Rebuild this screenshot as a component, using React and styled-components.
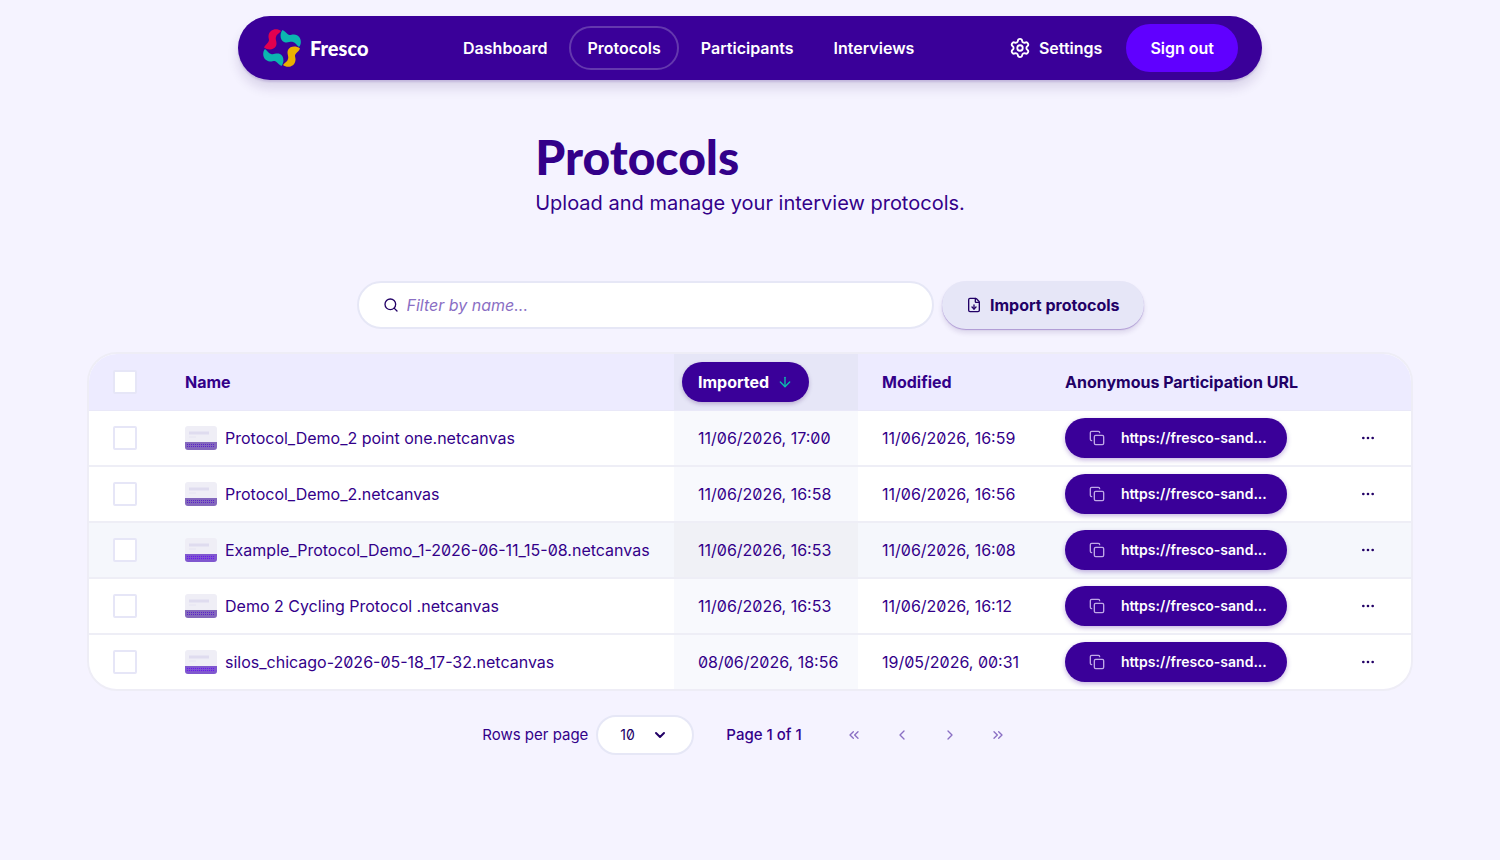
import styled, { createGlobalStyle, css } from "styled-components";
import {
  ArrowDown,
  ChevronDown,
  ChevronLeft,
  ChevronRight,
  ChevronsLeft,
  ChevronsRight,
  Copy,
  Ellipsis,
  FileDown,
  Search,
  Settings,
} from "lucide-react";

const protocols = [
  {
    name: "Protocol_Demo_2 point one.netcanvas",
    imported: "11/06/2026, 17:00",
    modified: "11/06/2026, 16:59",
  },
  {
    name: "Protocol_Demo_2.netcanvas",
    imported: "11/06/2026, 16:58",
    modified: "11/06/2026, 16:56",
  },
  {
    name: "Example_Protocol_Demo_1-2026-06-11_15-08.netcanvas",
    imported: "11/06/2026, 16:53",
    modified: "11/06/2026, 16:08",
    active: true,
    bright: true,
  },
  {
    name: "Demo 2 Cycling Protocol .netcanvas",
    imported: "11/06/2026, 16:53",
    modified: "11/06/2026, 16:12",
  },
  {
    name: "silos_chicago-2026-05-18_17-32.netcanvas",
    imported: "08/06/2026, 18:56",
    modified: "19/05/2026, 00:31",
    bright: true,
  },
];

const links = ["Dashboard", "Protocols", "Participants", "Interviews"];

const petal =
  "M19 3C15 -.5 7 1 6.500 8C6.300 11 8 12 6 14.500C5 16 3 17 2 19.500C6 22.500 12 22 14 18C15.500 14 13 12 14 9C14.500 6.500 17 5.500 19 3Z";

function Logo() {
  return (
    <svg width="40" height="40" viewBox="0 0 40 40" aria-hidden="true">
      <path d={petal} fill="#e2004f" />
      <path d={petal} fill="#0bb5b0" transform="rotate(90 20 20)" />
      <path d={petal} fill="#ebb000" transform="rotate(180 20 20)" />
      <path d={petal} fill="#0bb5b0" transform="rotate(270 20 20)" />
    </svg>
  );
}

function Thumbnail({ bright }) {
  return (
    <Thumb viewBox="0 0 32 24" aria-hidden="true">
      <rect width="32" height="24" rx="3" fill="#efeef6" />
      <path d="M4 7h20" stroke="#dfdcef" strokeWidth="3" />
      <path d="M4 11h7" stroke="#e6e4f2" />
      <path d="M0 16h32v5a3 3 0 0 1-3 3H3a3 3 0 0 1-3-3z" fill={bright ? "#7f57cf" : "#8468bd"} />
      <path
        d="M2 18.500h28M2 20.500h28"
        stroke={bright ? "#6a14f0" : "#5a22c8"}
        strokeDasharray="1 1"
      />
    </Thumb>
  );
}

export default function App() {
  return (
    <>
      <GlobalStyle />
      <Page>
        <NavBar>
          <Brand href="#">
            <Logo />
            Fresco
          </Brand>
          <NavLinks>
            {links.map((link) => (
              <NavLink key={link} href="#" $active={link === "Protocols"}>
                {link}
              </NavLink>
            ))}
          </NavLinks>
          <NavEnd>
            <SettingsLink href="#">
              <Settings size={22} />
              Settings
            </SettingsLink>
            <SignOut type="button">Sign out</SignOut>
          </NavEnd>
        </NavBar>

        <Heading>
          <Title>Protocols</Title>
          <Lead>Upload and manage your interview protocols.</Lead>
        </Heading>

        <Toolbar>
          <SearchBox>
            <Search size={16} />
            <SearchInput type="text" aria-label="Filter by name" placeholder="Filter by name..." />
          </SearchBox>
          <ImportButton type="button">
            <FileDown size={16} />
            Import protocols
          </ImportButton>
        </Toolbar>

        <TableFrame>
          <Table>
            <colgroup>
              <Col $width={72} />
              <Col />
              <Col $width={184} />
              <Col $width={183} />
              <Col $width={283} />
              <Col $width={87} />
            </colgroup>
            <thead>
              <tr>
                <HeadCell>
                  <Checkbox type="checkbox" aria-label="Select all" />
                </HeadCell>
                <HeadCell>
                  <SortButton type="button">Name</SortButton>
                </HeadCell>
                <HeadCell $sorted>
                  <SortButton type="button" $active>
                    Imported
                    <ArrowDown size={16} />
                  </SortButton>
                </HeadCell>
                <HeadCell>
                  <SortButton type="button">Modified</SortButton>
                </HeadCell>
                <HeadCell>Anonymous Participation URL</HeadCell>
                <HeadCell />
              </tr>
            </thead>
            <tbody>
              {protocols.map((protocol) => (
                <Row key={protocol.name} $active={protocol.active}>
                  <Cell>
                    <Checkbox type="checkbox" aria-label={`Select ${protocol.name}`} />
                  </Cell>
                  <Cell>
                    <ProtocolName>
                      <Thumbnail bright={protocol.bright} />
                      {protocol.name}
                    </ProtocolName>
                  </Cell>
                  <Cell $sorted>{protocol.imported}</Cell>
                  <Cell>{protocol.modified}</Cell>
                  <Cell>
                    <UrlButton type="button">
                      <Copy size={16} />
                      https://fresco-sand...
                    </UrlButton>
                  </Cell>
                  <Cell>
                    <MenuButton type="button" aria-label="Open menu">
                      <Ellipsis size={16} />
                    </MenuButton>
                  </Cell>
                </Row>
              ))}
            </tbody>
          </Table>
        </TableFrame>

        <Pagination>
          <RowsLabel htmlFor="rows">Rows per page</RowsLabel>
          <SelectBox>
            <RowsSelect id="rows" defaultValue="10">
              <option>10</option>
              <option>20</option>
              <option>50</option>
            </RowsSelect>
            <ChevronDown size={16} strokeWidth={3} />
          </SelectBox>
          <PageCount>Page 1 of 1</PageCount>
          <Pager>
            <PageButton type="button" aria-label="First page" disabled>
              <ChevronsLeft size={16} />
            </PageButton>
            <PageButton type="button" aria-label="Previous page" disabled>
              <ChevronLeft size={16} />
            </PageButton>
            <PageButton type="button" aria-label="Next page" disabled>
              <ChevronRight size={16} />
            </PageButton>
            <PageButton type="button" aria-label="Last page" disabled>
              <ChevronsRight size={16} />
            </PageButton>
          </Pager>
        </Pagination>
      </Page>
    </>
  );
}

const GlobalStyle = createGlobalStyle`
  * {
    box-sizing: border-box;
  }
  body {
    margin: 0;
    background: #f5f3ff;
    color: #330089;
    font-family: Inter, "Liberation Sans", sans-serif;
    font-size: 16px;
    line-height: 24px;
    font-feature-settings: "zero";
  }
  button,
  input,
  select {
    font: inherit;
    color: inherit;
    font-feature-settings: inherit;
  }
  button {
    border: none;
    background: none;
    padding: 0;
    cursor: pointer;
  }
  a {
    color: inherit;
    text-decoration: none;
  }
`;

const Page = styled.main`
  display: flex;
  flex-direction: column;
  align-items: center;
  padding: 16px 24px 24px;
`;

const NavBar = styled.nav`
  display: flex;
  justify-content: space-between;
  align-items: center;
  width: 100%;
  max-width: 1024px;
  height: 64px;
  padding: 0 24px;
  border-radius: 32px;
  background: #3a0099;
  color: #fff;
  font-weight: 600;
  box-shadow: 0 2px 2px rgba(51, 0, 137, 0.14), 0 8px 12px rgba(51, 20, 100, 0.14);
`;

const Brand = styled.a`
  display: flex;
  align-items: center;
  gap: 8px;
  font-family: Lato, sans-serif;
  font-size: 20px;
  font-weight: 900;
`;

const NavLinks = styled.div`
  display: flex;
  gap: 4px;
`;

const NavLink = styled.a`
  padding: 8px 16px;
  border: 2px solid ${(props) => (props.$active ? "#6438ae" : "transparent")};
  border-radius: 22px;
`;

const NavEnd = styled.div`
  display: flex;
  align-items: center;
  gap: 24px;
`;

const SettingsLink = styled.a`
  display: flex;
  align-items: center;
  gap: 8px;
`;

const SignOut = styled.button`
  height: 48px;
  padding: 0 24px;
  border-radius: 24px;
  background: #6000ff;
`;

const Heading = styled.header`
  margin: 47px 0 64px;
`;

const Title = styled.h1`
  margin: 0 0 2px;
  font-family: Lato, sans-serif;
  font-size: 48px;
  line-height: 60px;
  font-weight: 900;
`;

const Lead = styled.p`
  margin: 0;
  font-size: 20px;
  line-height: 28px;
`;

const Toolbar = styled.div`
  display: flex;
  gap: 8px;
  width: 100%;
  max-width: 787px;
  margin-bottom: 23px;
`;

const SearchBox = styled.label`
  flex: 1;
  display: flex;
  align-items: center;
  gap: 8px;
  height: 48px;
  padding: 0 24px;
  border: 2px solid #e6e7f6;
  border-radius: 24px;
  background: #fff;
  color: #220066;
`;

const SearchInput = styled.input`
  flex: 1;
  min-width: 0;
  border: none;
  outline: none;
  padding: 0;
  background: none;
  &::placeholder {
    color: #8a6fc4;
    opacity: 1;
    font-style: italic;
  }
`;

const ImportButton = styled.button`
  display: flex;
  align-items: center;
  gap: 8px;
  height: 48px;
  padding: 0 24px;
  border-radius: 24px;
  background: #e6e6f7;
  color: #220066;
  font-weight: 700;
  box-shadow: 0 1px 1px rgba(58, 0, 153, 0.3), 0 4px 5px rgba(51, 20, 100, 0.12);
`;

const TableFrame = styled.div`
  align-self: stretch;
  margin: 0 63px 24px;
  border: 2px solid #eeedf6;
  border-radius: 30px;
  overflow: hidden;
`;

const Table = styled.table`
  width: 100%;
  table-layout: fixed;
  border-collapse: separate;
  border-spacing: 0;
  background: #fff;
`;

const Col = styled.col`
  width: ${(props) => (props.$width ? `${props.$width}px` : "auto")};
`;

const HeadCell = styled.th`
  height: 57px;
  padding: 0 24px;
  border-bottom: 1px solid #e9e8f8;
  background: ${(props) => (props.$sorted ? "#e6e6f7" : "#edebff")};
  color: #220066;
  text-align: left;
  font-weight: 700;
  white-space: nowrap;
`;

const Cell = styled.td`
  height: 56px;
  padding: 0 24px;
  border-bottom: 2px solid #eeeef6;
  background: ${(props) => (props.$sorted ? "#f8f9fd" : "transparent")};
  white-space: nowrap;
`;

const Row = styled.tr`
  ${(props) =>
    props.$active &&
    css`
      background: #f5f7fc;
      ${Cell}:nth-child(3) {
        background: #f0f1f6;
      }
    `}
  &:last-child ${Cell} {
    height: 54px;
    border-bottom: none;
  }
`;

const SortButton = styled.button`
  display: inline-flex;
  align-items: center;
  gap: 8px;
  height: 40px;
  color: #330089;
  font-weight: 700;
  vertical-align: middle;
  ${(props) =>
    props.$active &&
    css`
      margin-left: -16px;
      padding: 0 16px;
      border-radius: 20px;
      background: #3a0099;
      color: #fff;
      box-shadow: 0 2px 4px rgba(51, 0, 100, 0.25);
      svg {
        color: #0bbfae;
      }
    `}
`;

const Checkbox = styled.input`
  appearance: none;
  display: block;
  width: 24px;
  height: 24px;
  margin: 0;
  border: 2px solid #e6e6f7;
  border-radius: 2px;
  background: #fff;
`;

const ProtocolName = styled.div`
  display: flex;
  align-items: center;
  gap: 8px;
`;

const Thumb = styled.svg`
  flex: none;
  width: 32px;
  height: 24px;
`;

const UrlButton = styled.button`
  display: flex;
  align-items: center;
  gap: 16px;
  width: 222px;
  height: 40px;
  padding: 0 24px;
  border-radius: 20px;
  background: #3a0099;
  color: #fff;
  font-size: 14px;
  font-weight: 600;
  box-shadow: 0 2px 5px rgba(58, 0, 153, 0.3);
  svg {
    flex: none;
    color: #bfa8e6;
  }
`;

const MenuButton = styled.button`
  display: grid;
  place-items: center;
  width: 40px;
  height: 40px;
  color: #220066;
`;

const Pagination = styled.div`
  display: flex;
  align-items: center;
  font-size: 15px;
`;

const RowsLabel = styled.label`
  margin-right: 8px;
`;

const SelectBox = styled.div`
  display: flex;
  align-items: center;
  height: 40px;
  padding-right: 24px;
  border: 2px solid #e6e7f6;
  border-radius: 20px;
  background: #fff;
  color: #220066;
  svg {
    margin-left: -16px;
    pointer-events: none;
  }
`;

const RowsSelect = styled.select`
  appearance: none;
  width: 70px;
  height: 36px;
  padding: 0 24px 0 22px;
  border: none;
  outline: none;
  background: none;
  font-size: 14px;
`;

const PageCount = styled.span`
  margin: 0 32px;
  font-weight: 500;
`;

const Pager = styled.div`
  display: flex;
  gap: 8px;
`;

const PageButton = styled.button`
  display: grid;
  place-items: center;
  width: 40px;
  height: 40px;
  color: #8a6fc4;
`;
